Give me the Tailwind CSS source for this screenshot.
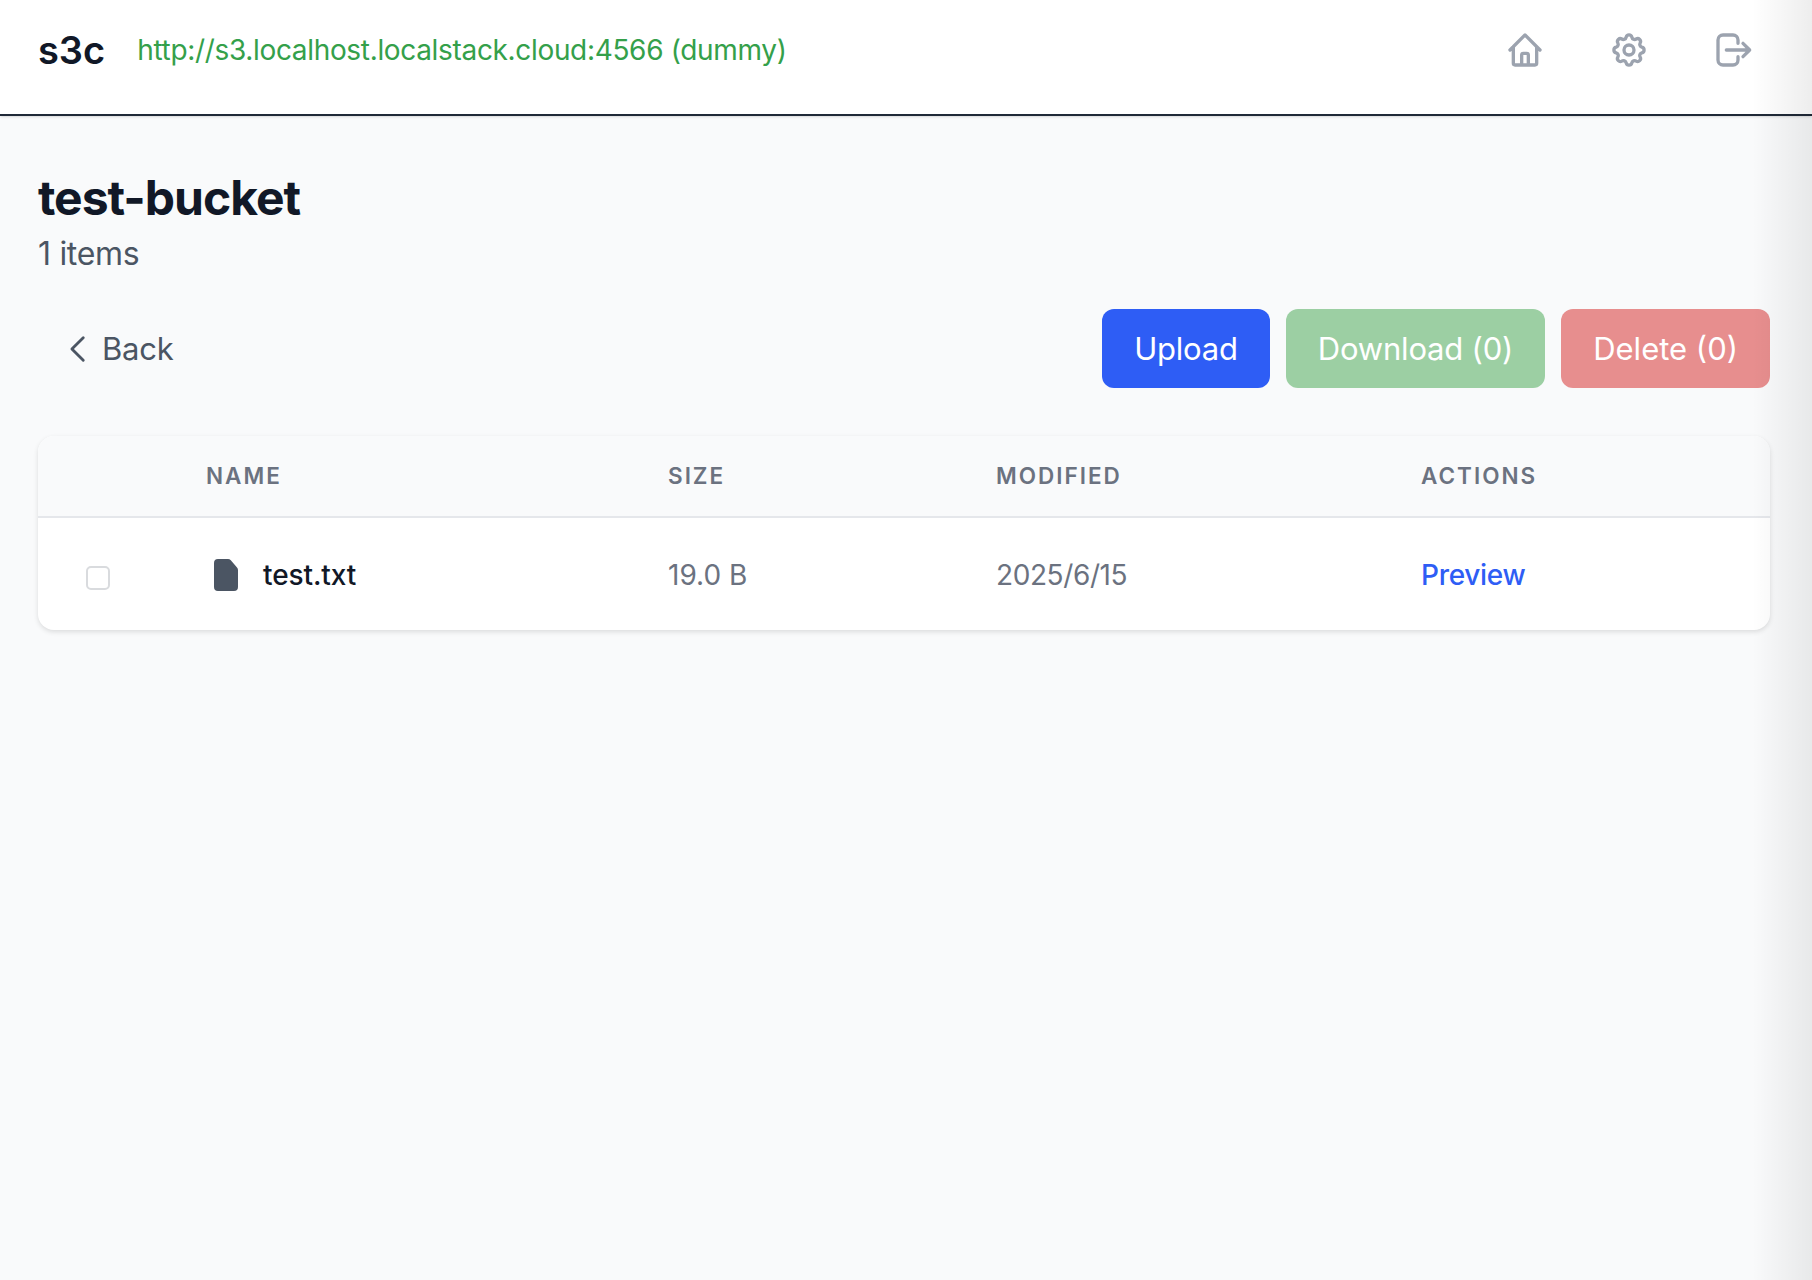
<!DOCTYPE html>
<html lang="en">
<head>
  <meta charset="UTF-8">
  <title>s3c</title>
  <script src="https://cdn.jsdelivr.net/npm/@tailwindcss/browser@4"></script>
</head>
<body class="relative bg-[#f9fafb] h-[1280px] overflow-hidden font-['Inter',sans-serif]">
  <!-- header -->
  <header class="h-[116px] bg-white border-b-2 border-[#1f2937] shadow-sm flex items-center justify-between pl-[38px] pr-[59px] pb-[14px]">
    <div class="flex items-center gap-[32px]">
      <span class="text-[38px] font-semibold text-[#111827] tracking-[0px]">s3c</span>
      <span class="text-[28px] text-[#34a04a] tracking-[-0.33px]">http://s3.localhost.localstack.cloud:4566 (dummy)</span>
    </div>
    <div class="flex items-center gap-[64px] text-[#9ca3af]">
      <svg class="w-[40px] h-[40px]" viewBox="0 0 24 24" fill="none" stroke="currentColor" stroke-width="2" stroke-linecap="round" stroke-linejoin="round"><path d="M3 12l9-9 9 9M5 10v10a1 1 0 001 1h12a1 1 0 001-1V10M10 21v-6a1 1 0 011-1h2a1 1 0 011 1v6"/></svg>
      <svg class="w-[40px] h-[40px]" viewBox="0 0 24 24" fill="none" stroke="currentColor" stroke-width="2" stroke-linecap="round" stroke-linejoin="round"><path d="M10.3 4.3c.4-1.8 3-1.8 3.4 0a1.7 1.7 0 002.6 1.1c1.5-.9 3.3.8 2.4 2.4a1.7 1.7 0 001 2.5c1.8.4 1.8 3 0 3.4a1.7 1.7 0 00-1 2.6c.9 1.5-.9 3.3-2.4 2.4a1.7 1.7 0 00-2.6 1c-.4 1.8-3 1.8-3.4 0a1.7 1.7 0 00-2.6-1c-1.5.9-3.3-.9-2.4-2.4a1.7 1.7 0 00-1-2.6c-1.8-.4-1.8-3 0-3.4a1.7 1.7 0 001-2.5c-.9-1.6.9-3.3 2.4-2.4a1.7 1.7 0 002.6-1.1z"/><circle cx="12" cy="12" r="3"/></svg>
      <svg class="w-[40px] h-[40px]" viewBox="0 0 24 24" fill="none" stroke="currentColor" stroke-width="2" stroke-linecap="round" stroke-linejoin="round"><path d="M12 21H6a3 3 0 01-3-3V6a3 3 0 013-3h6a3 3 0 013 3v2M15 16v2a3 3 0 01-3 3M8 12h14M18 8l4 4-4 4"/></svg>
    </div>
  </header>

  <main class="pl-[38px] pr-[42px]">
    <h1 class="mt-[55px] text-[48px] leading-[54px] font-bold text-[#111827] tracking-[-1px]">test-bucket</h1>
    <p class="mt-[9px] text-[32px] leading-[40px] text-[#4b5563] tracking-[-0.3px]">1 items</p>

    <div class="mt-[35px] flex items-center justify-between">
      <button class="flex items-center gap-[8px] pl-[24px] text-[31px] text-[#4b5563] tracking-[-0.2px]">
        <svg class="w-[34px] h-[34px]" viewBox="0 0 24 24" fill="none" stroke="currentColor" stroke-width="2" stroke-linecap="round" stroke-linejoin="round"><path d="M15 4l-8 8 8 8"/></svg>
        <span class="pt-[2px] -ml-[2px]">Back</span>
      </button>
      <div class="flex gap-[16px] text-[31px] text-white">
        <button class="h-[79px] px-[32px] pt-[2px] rounded-[12px] bg-[#2e5df5] tracking-[-0.2px]">Upload</button>
        <button class="h-[79px] px-[32px] pt-[2px] rounded-[12px] bg-[#9ccfa3] tracking-[-0.2px]">Download (0)</button>
        <button class="h-[79px] px-[32px] pt-[2px] rounded-[12px] bg-[#e78e8e]">Delete (0)</button>
      </div>
    </div>

    <div class="mt-[48px] bg-white rounded-[16px] shadow-[0_2px_5px_rgba(0,0,0,0.12)] overflow-hidden">
      <table class="w-full table-fixed text-left">
        <colgroup>
          <col class="w-[168px]"><col class="w-[462px]"><col class="w-[328px]"><col class="w-[425px]"><col>
        </colgroup>
        <thead class="bg-[#f9fafb] border-b-2 border-[#e5e7eb]">
          <tr class="h-[81px] text-[22.5px] tracking-[2px] text-[#6b7280] uppercase">
            <th></th>
            <th class="font-semibold">Name</th>
            <th class="font-semibold">Size</th>
            <th class="font-semibold">Modified</th>
            <th class="font-semibold">Actions</th>
          </tr>
        </thead>
        <tbody>
          <tr class="h-[113px] text-[28px]">
            <td class="pl-[48px]"><span class="block w-[24px] h-[24px] mt-[7px] rounded-[5px] border-2 border-[#d9dbde] bg-white"></span></td>
            <td class="pt-[2px]">
              <div class="flex items-center gap-[25px] pl-[8px] font-medium text-[#111827]">
                <svg class="w-[24px] h-[32px]" viewBox="0 0 24 32"><path fill="#4b5563" d="M4 0h10a4 4 0 012.8 1.2l6 7A4 4 0 0124 11v17a4 4 0 01-4 4H4a4 4 0 01-4-4V4a4 4 0 014-4z"/></svg>
                <span class="tracking-[-0.1px]">test.txt</span>
              </div>
            </td>
            <td class="text-[#6b7280] pt-[2px]">19.0 B</td>
            <td class="text-[#6b7280] pt-[2px] tracking-[-0.4px]">2025/6/15</td>
            <td class="font-medium pt-[2px] text-[#2e5df5] tracking-[-0.3px]">Preview</td>
          </tr>
        </tbody>
      </table>
    </div>
  </main>

  <div class="absolute top-0 right-0 bottom-0 w-[60px] bg-gradient-to-l from-black/[0.07] to-transparent pointer-events-none"></div>
</body>
</html>
